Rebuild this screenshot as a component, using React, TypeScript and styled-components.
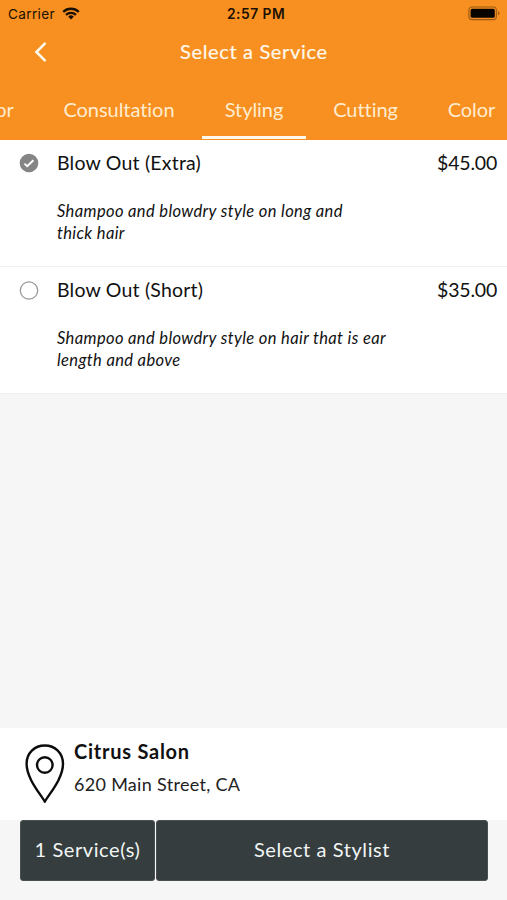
import React from "react";
import styled, { createGlobalStyle } from "styled-components";

const GlobalStyle = createGlobalStyle`
  * { box-sizing: border-box; }
  body { margin: 0; background: #f6f6f6; }
  button { border: 0; padding: 0; background: none; color: inherit; font: inherit; cursor: pointer; }
`;

const Screen = styled.div`
  width: 507px;
  height: 900px;
  display: flex;
  flex-direction: column;
  overflow: hidden;
  background: #f6f6f6;
  color: #111;
  font-family: Lato, "Open Sans", sans-serif;
  font-variant-ligatures: none;
`;

const Header = styled.header`
  height: 140px;
  flex: none;
  background: #f79020;
  color: #fff8ec;
`;

const StatusBar = styled.div`
  height: 27px;
  padding: 0 7px 0 8px;
  display: grid;
  grid-template-columns: 219px auto 1fr;
  align-items: center;
  color: #1c1002;
  font-family: Inter, sans-serif;
  font-size: 13.6px;
`;

const Carrier = styled.div`
  display: flex;
  align-items: center;
  gap: 7px;
  letter-spacing: 0.35px;
`;

const Clock = styled.div`
  font-weight: 600;
  font-size: 13.8px;
  letter-spacing: 0.5px;
`;

const BatteryIcon = styled.svg`
  justify-self: end;
`;

const TitleBar = styled.div`
  height: 48px;
  padding-left: 34px;
  display: grid;
  grid-template-columns: 146px 1fr;
  align-items: center;
`;

const BackButton = styled.button`
  width: 14px;
  height: 22px;
  margin-top: 2px;
`;

const Title = styled.h1`
  margin: 0;
  font-size: 20px;
  font-weight: 400;
  line-height: 24px;
  letter-spacing: 0.65px;
  -webkit-text-stroke: 0.2px;
`;

const Tabs = styled.nav`
  height: 65px;
  margin-left: -56px;
  display: flex;
  gap: 6px;
`;

const Tab = styled.button<{ $width: number; $active?: boolean }>`
  flex: none;
  width: ${(p) => p.$width}px;
  height: 64px;
  padding-top: 6px;
  border-bottom: 3px solid ${(p) => (p.$active ? "#fff8ec" : "transparent")};
  font-size: 20px;
  line-height: 24px;
  letter-spacing: -0.05px;
  color: #ffecd0;
  white-space: nowrap;
`;

const Service = styled.section`
  height: 127px;
  flex: none;
  padding: 11px 10px 0 19px;
  display: grid;
  grid-template-columns: 38px 1fr auto;
  grid-template-rows: 50px 1fr;
  background: #fff;
  border-bottom: 1px solid #f0f0f0;
`;

const Check = styled.svg`
  margin-top: 2px;
`;

const ServiceName = styled.h2`
  margin: 0;
  font-size: 19.5px;
  font-weight: 400;
  line-height: 24px;
  letter-spacing: 0.2px;
`;

const Price = styled.div`
  font-size: 19.5px;
  line-height: 24px;
  letter-spacing: -0.2px;
`;

const Description = styled.p`
  grid-column: 2 / 4;
  margin: 0;
  width: 340px;
  font-size: 16.5px;
  font-style: italic;
  line-height: 21.5px;
  letter-spacing: 0.37px;
`;

const Salon = styled.section`
  height: 92px;
  margin-top: auto;
  flex: none;
  padding: 11px 0 0 24px;
  display: flex;
  gap: 9px;
  background: #fff;
`;

const PinIcon = styled.svg`
  margin-top: 4px;
  flex: none;
`;

const SalonName = styled.h2`
  margin: 0;
  font-size: 20px;
  font-weight: 700;
  line-height: 24px;
  letter-spacing: 0.75px;
`;

const Address = styled.p`
  margin: 9px 0 0;
  font-size: 18px;
  line-height: 24px;
  letter-spacing: 0.3px;
  color: #222;
`;

const Footer = styled.footer`
  height: 80px;
  flex: none;
  padding: 0 19px 0 20px;
  display: flex;
  gap: 1px;
`;

const FooterButton = styled.button<{ $width?: number }>`
  height: 61px;
  padding-bottom: 4px;
  ${(p) => (p.$width ? `flex: none; width: ${p.$width}px;` : "flex: 1;")}
  border: 1px solid #485052;
  border-radius: 3px;
  background: #363d3e;
  color: #f1f5f5;
  font-size: 20px;
  letter-spacing: 0.58px;
`;

const tabs = [
  { label: "Color", width: 92 },
  { label: "Consultation", width: 154 },
  { label: "Styling", width: 104, active: true },
  { label: "Cutting", width: 107 },
  { label: "Color", width: 93 },
];

const services = [
  { name: "Blow Out (Extra)", price: "$45.00", lines: ["Shampoo and blowdry style on long and", "thick hair"], selected: true },
  { name: "Blow Out (Short)", price: "$35.00", lines: ["Shampoo and blowdry style on hair that is ear", "length and above"], selected: false },
];

function WifiIcon() {
  return (
    <svg width="18" height="13" viewBox="0 0 18 13" fill="none" stroke="#1c1002" strokeWidth="2.3">
      <path d="M1.2 4.9a11.2 11.2 0 0 1 15.6 0M4 7.8a7.2 7.2 0 0 1 10 0" />
      <path d="M9 12.4 6.2 9.7a4 4 0 0 1 5.6 0Z" fill="#1c1002" stroke="none" />
    </svg>
  );
}

export default function App() {
  return (
    <>
      <GlobalStyle />
      <Screen>
        <Header>
          <StatusBar>
            <Carrier>
              Carrier
              <WifiIcon />
            </Carrier>
            <Clock>2:57 PM</Clock>
            <BatteryIcon width="32" height="15" viewBox="0 0 32 15">
              <rect x="0.9" y="1" width="27.5" height="12.6" rx="3.4" fill="none" stroke="#9a5a14" strokeWidth="1.1" />
              <rect x="2.6" y="2.8" width="24.2" height="9" rx="1.6" fill="#080400" />
              <path d="M30 5.3q1.5.8 1.5 2t-1.5 2Z" fill="#9a5a14" />
            </BatteryIcon>
          </StatusBar>
          <TitleBar>
            <BackButton aria-label="Back">
              <svg width="14" height="22" viewBox="0 0 14 22" fill="none" stroke="#fff8ec" strokeWidth="2.6">
                <path d="M11.5 1.8 2.4 11l9.1 9.2" />
              </svg>
            </BackButton>
            <Title>Select a Service</Title>
          </TitleBar>
          <Tabs>
            {tabs.map((t, i) => (
              <Tab key={i} $width={t.width} $active={t.active}>{t.label}</Tab>
            ))}
          </Tabs>
        </Header>
        {services.map((s) => (
          <Service key={s.name}>
            <Check width="20" height="20" viewBox="0 0 20 20" fill="none">
              {s.selected ? (
                <>
                  <circle cx="10" cy="10" r="9.3" fill="#858585" />
                  <path d="m5.4 10.6 2.8 2.6 6.2-6" stroke="#fff" strokeWidth="1.9" />
                </>
              ) : (
                <circle cx="10" cy="10.5" r="8.7" stroke="#999" strokeWidth="1.3" />
              )}
            </Check>
            <ServiceName>{s.name}</ServiceName>
            <Price>{s.price}</Price>
            <Description>{s.lines[0]}<br />{s.lines[1]}</Description>
          </Service>
        ))}
        <Salon>
          <PinIcon width="41" height="61" viewBox="0 0 41 61" fill="none" stroke="#0c0c0c" strokeWidth="2.4">
            <path d="M20.8 58.8C17 51.5 2.6 36 2.6 20.8 2.6 10 10.5 2.5 20.8 2.5S39 10 39 20.8c0 15.2-14.4 30.7-18.2 38Z" strokeLinejoin="round" />
            <circle cx="20.8" cy="22" r="7.8" />
          </PinIcon>
          <div>
            <SalonName>Citrus Salon</SalonName>
            <Address>620 Main Street, CA</Address>
          </div>
        </Salon>
        <Footer>
          <FooterButton $width={135}>1 Service(s)</FooterButton>
          <FooterButton>Select a Stylist</FooterButton>
        </Footer>
      </Screen>
    </>
  );
}
